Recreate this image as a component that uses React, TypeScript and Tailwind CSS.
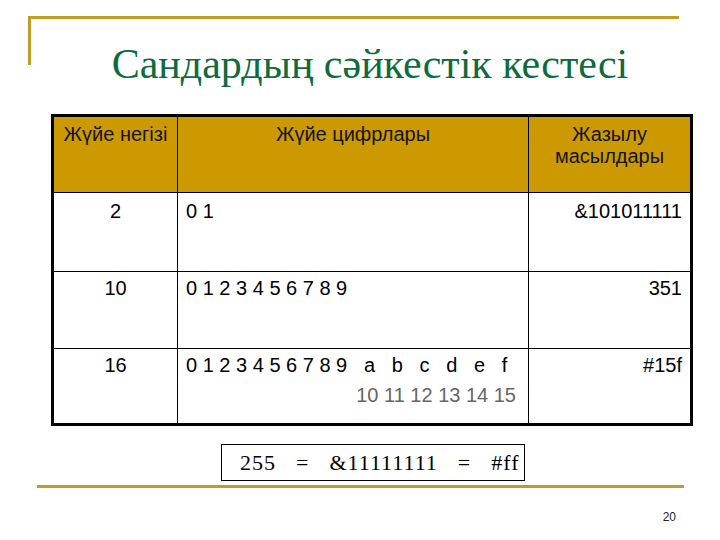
const sans = "font-['Liberation_Sans',Arial,sans-serif]"
const serif = "font-['Liberation_Serif','Times_New_Roman',serif]"

const rows = [
	{ base: '2', digits: '0 1', notation: '&101011111', h: 'h-[79px]', pt: 'pt-[7px]' },
	{ base: '10', digits: '0 1 2 3 4 5 6 7 8 9', notation: '351', h: 'h-[77px]', pt: 'pt-[5px]' },
]

export default function App() {
	return (
		<div className={`relative w-[720px] h-[540px] bg-white overflow-hidden ${sans}`}>
			{/* corner rule behind the title */}
			<div className="absolute left-[28px] top-[16px] w-[651px] h-[49px] border-t-[3px] border-l-[3px] border-[#c49c22]" />

			<div className="relative flex flex-col">
				<h1 className={`mt-[43px] pl-[20px] text-center text-[42px] leading-[42px] text-[#0d6b3d] ${serif}`}>
					Сандардың сәйкестік кестесі
				</h1>

				{/* table */}
				<div className="ml-[51px] mt-[29px] w-[642px] border-[3px] border-black text-[20px] leading-[22px] text-black">
					<div className="grid grid-cols-[124px_351px_161px] h-[76px] bg-[#cc9900] border-b border-black text-[#141414]">
						<div className="border-r border-black pt-[6px] text-center">Жүйе негізі</div>
						<div className="border-r border-black pt-[6px] text-center">Жүйе цифрлары</div>
						<div className="pt-[6px] text-center">
							Жазылу
							<br />
							масылдары
						</div>
					</div>

					{rows.map((r) => (
						<div key={r.base} className={`grid grid-cols-[124px_351px_161px] ${r.h} border-b border-black`}>
							<div className={`border-r border-black ${r.pt} text-center`}>{r.base}</div>
							<div className={`border-r border-black ${r.pt} pl-[8px]`}>{r.digits}</div>
							<div className={`${r.pt} pr-[8px] text-right`}>{r.notation}</div>
						</div>
					))}

					<div className="grid grid-cols-[124px_351px_161px] h-[74px]">
						<div className="border-r border-black pt-[5px] text-center">16</div>
						<div className="border-r border-black pt-[5px] pl-[8px]">
							<div className="whitespace-pre">{'0 1 2 3 4 5 6 7 8 9   a   b   c   d   e   f'}</div>
							<div className="mt-[8px] pr-[12px] text-right text-[#666666]">10 11 12 13 14 15</div>
						</div>
						<div className="pt-[5px] pr-[8px] text-right">#15f</div>
					</div>
				</div>

				{/* equality box */}
				<div
					className={`ml-[221px] mt-[18px] w-[304px] h-[37px] flex gap-[20px] border border-black pl-[18px] pt-[6px] text-[22px] leading-[24px] tracking-[1px] text-black ${serif}`}
				>
					<span>255</span>
					<span>=</span>
					<span>&amp;11111111</span>
					<span>=</span>
					<span>#ff</span>
				</div>

				<div className="ml-[37px] mt-[4px] w-[647px] h-[3px] bg-[#c49c22]" />

				<div className="mt-[22px] pr-[44px] text-right text-[12px] leading-[14px] text-[#222]">20</div>
			</div>
		</div>
	)
}
